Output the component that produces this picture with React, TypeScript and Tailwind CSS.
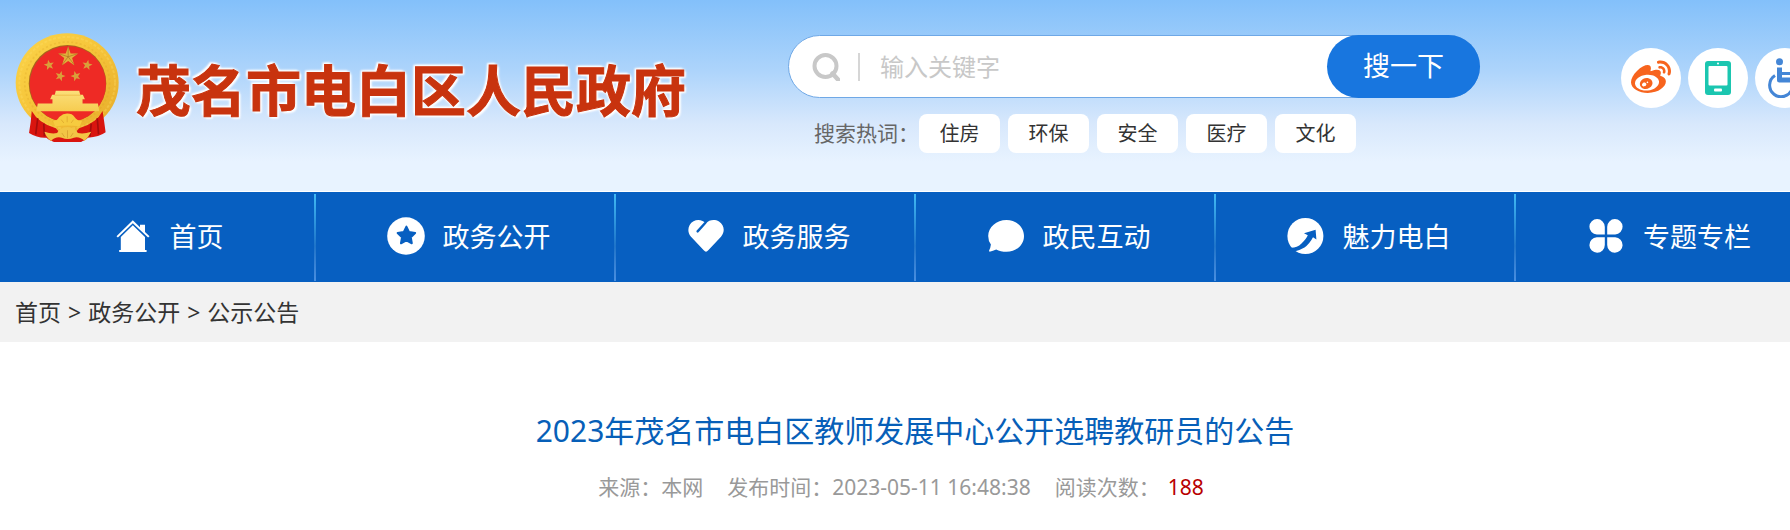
import type { ReactNode } from "react";
import { FaWeibo } from "react-icons/fa";

const star = (cx: number, cy: number, r: number, inner = 0.4, turn = 0) =>
  Array.from({ length: 10 }, (_, i) => {
    const a = -Math.PI / 2 + turn + (i * Math.PI) / 5;
    const d = i % 2 ? r * inner : r;
    return `${(cx + d * Math.cos(a)).toFixed(2)},${(cy + d * Math.sin(a)).toFixed(2)}`;
  }).join(" ");

function Emblem() {
  return (
    <svg viewBox="28 18 314 332" className="h-[111px] w-[105px] shrink-0" aria-hidden="true">
      <defs>
        <linearGradient id="gold" x1="0" y1="0" x2="1" y2="1">
          <stop offset="0" stopColor="#fbd54a" />
          <stop offset="0.45" stopColor="#f6c53a" />
          <stop offset="1" stopColor="#e6ab2a" />
        </linearGradient>
        <linearGradient id="gate" x1="0" y1="0" x2="0" y2="1">
          <stop offset="0" stopColor="#fbdf7a" />
          <stop offset="1" stopColor="#f6cc50" />
        </linearGradient>
      </defs>
      <ellipse cx="184" cy="170" rx="154" ry="148" fill="url(#gold)" />
      <ellipse cx="184" cy="170" rx="143" ry="137" fill="none" stroke="#ffe26e" strokeWidth="6" strokeDasharray="9 5" opacity="0.3" />
      <ellipse cx="184" cy="170" rx="127" ry="122" fill="none" stroke="#d89a20" strokeWidth="5" strokeDasharray="6 7" opacity="0.25" />
      <ellipse cx="185" cy="172" rx="116" ry="115" fill="#a8641c" />
      <ellipse cx="186" cy="174" rx="114" ry="114" fill="#ee2a25" />
      <path d="M78 254 Q98 290 150 306 L166 324 L150 347 Q132 344 122 334 Q96 336 70 320 Q76 286 78 254Z" fill="#d9150f" />
      <path d="M290 254 Q272 290 220 306 L204 324 L218 347 Q238 344 246 334 Q280 332 299 318 Q295 286 290 254Z" fill="#d9150f" />
      <path d="M96 276 L90 324 M114 292 L116 330 M274 276 L278 324 M256 292 L252 330" stroke="#a50d0c" strokeWidth="5" fill="none" />
      <path d="M128 322 H242 L226 347 H144Z" fill="#d9150f" />
      <polygon points={star(187, 92, 31)} fill="#e2b13c" />
      <path d="M187 62 V92 L215 83 M187 92 L205 116 M187 92 L169 116 M187 92 L159 83" stroke="#a9721f" strokeWidth="2" fill="none" />
      <polygon points={star(130, 117, 16, 0.42, -0.2)} fill="#d9a03a" />
      <polygon points={star(244, 117, 16, 0.42, 0.2)} fill="#d9a03a" />
      <polygon points={star(163, 150, 16, 0.42, 0.3)} fill="#d9a03a" />
      <polygon points={star(210, 150, 16, 0.42, -0.3)} fill="#d9a03a" />
      <path d="M150 194 H220 L223 206 H231 L237 219 H230 V232 H276 L280 255 H92 L96 232 H140 V219 H133 L139 206 H147Z" fill="url(#gate)" />
      <path d="M146 207 H225" stroke="#eab23c" strokeWidth="2" />
      <path d="M142 284 Q154 284 160 272 Q172 262 184 262 Q200 262 206 272 Q214 284 228 284 L222 300 Q202 298 185 298 Q166 298 148 300Z" fill="#f6cb3f" />
      <path d="M166 280 L174 290 M184 270 V288 M203 280 L196 290" stroke="#d9a02a" strokeWidth="2" />
      <path d="M116 316 Q138 324 154 320 Q160 304 185 302 Q210 304 216 320 Q234 324 256 316 Q246 334 236 344 Q222 330 204 334 Q185 342 168 334 Q148 330 136 344 Q122 334 116 316Z" fill="#f2c545" />
      <path d="M168 320 L176 332 M185 312 V336 M202 320 L194 332" stroke="#d0962a" strokeWidth="2" />
    </svg>
  );
}

const HomeIcon = () => (
  <svg viewBox="0 0 34 32" className="h-8 w-[34px]" fill="#fff" aria-hidden="true">
    <path d="M0.5 16.2 16.8 0.2 24 7.2V4.8h5v7.3l4.5 4.1-1.4 1.4L16.8 3.2 1.9 17.6Z" />
    <path d="M16.8 5.2 29 17v13h1.6v2H3.2v-2h1.6V17Z" />
  </svg>
);
const StarIcon = () => (
  <svg viewBox="0 0 38 38" className="h-[38px] w-[38px]" aria-hidden="true">
    <circle cx="19" cy="19" r="18.8" fill="#fff" />
    <polygon points={star(19.4, 18.8, 9.2, 0.5)} fill="#075fc1" stroke="#075fc1" strokeWidth="2" strokeLinejoin="round" />
  </svg>
);
const HeartIcon = () => (
  <svg viewBox="0 0 36 32" className="h-8 w-9" aria-hidden="true">
    <path d="M18 31.8Q17 31.8 15.5 30L3 16.8C-1.5 12 0 4 5.5 1.2C10-1 15 0.2 18 3.5C21-0.2 26.5-1 31 1.5C36.5 5 37.2 12 33 16.8L20.5 30Q19 31.8 18 31.8Z" fill="#fff" />
    <path d="M17.2 3 9.6 11.4" stroke="#075fc1" strokeWidth="2.4" strokeLinecap="round" />
  </svg>
);
const ChatIcon = () => (
  <svg viewBox="0 0 36 32" className="h-8 w-9" aria-hidden="true">
    <path d="M18.5 0C28.5 0 36 7 36 16S28.5 31.8 18.5 31.8C14.5 31.8 11 31 8.2 29.4Q5 30.8 1.6 31.7Q1 31.5 1.1 30.5Q2.6 27.5 2.9 24.5Q0.2 21 0.2 16C0.2 7 8.5 0 18.5 0Z" fill="#fff" />
  </svg>
);
const ArrowIcon = () => (
  <svg viewBox="0 0 37 36" className="h-9 w-[37px]" aria-hidden="true">
    <circle cx="18.4" cy="18" r="18" fill="#fff" />
    <path d="M3.5 29.8Q10 30 14.5 25.5Q19.5 20.5 20.8 17.2L17 15.2 28.6 11.7 29.4 21.5 26 19.3Q22.5 26 17.5 29.5Q13 32.2 7.5 33.4Z" fill="#075fc1" />
  </svg>
);
const CloverIcon = () => (
  <svg viewBox="0 0 34 34" className="h-[34px] w-[34px]" fill="#fff" aria-hidden="true">
    <path d="M15.8 15.5H7.8A7.7 7.7 0 1 1 15.8 7.8Z" />
    <path d="M18.2 15.5H26.2A7.7 7.7 0 1 0 18.2 7.8Z" />
    <path d="M15.8 18.3H7.8A7.7 7.7 0 1 0 15.8 26Z" />
    <path d="M18.2 18.3H26.2A7.7 7.7 0 1 1 18.2 26Z" />
  </svg>
);

const nav: { label: string; icon: ReactNode }[] = [
  { label: "首页", icon: <HomeIcon /> },
  { label: "政务公开", icon: <StarIcon /> },
  { label: "政务服务", icon: <HeartIcon /> },
  { label: "政民互动", icon: <ChatIcon /> },
  { label: "魅力电白", icon: <ArrowIcon /> },
  { label: "专题专栏", icon: <CloverIcon /> },
];

const hotWords = ["住房", "环保", "安全", "医疗", "文化"];

function Search() {
  return (
    <form className="w-[692px]" onSubmit={(e) => e.preventDefault()}>
      <div className="flex h-[63px] rounded-full border border-[#6fa8e6] bg-white">
        <label htmlFor="keyword" className="flex items-center pl-[23px]" aria-label="输入关键字">
          <svg viewBox="0 0 28 28" className="h-7 w-7" fill="none" stroke="#c8c8c8" aria-hidden="true">
            <circle cx="13.5" cy="13" r="11" strokeWidth="4" />
            <path d="M20.5 20.5 26 26.500" strokeWidth="4.5" strokeLinecap="round" />
          </svg>
          <span className="ml-[18px] h-7 w-0.5 bg-[#d6d6d6]" />
        </label>
        <input
          id="keyword"
          placeholder="输入关键字"
          className="min-w-0 flex-1 bg-transparent px-5 text-2xl outline-none placeholder:text-[#c8c8c8]"
        />
        <button className="-my-px -mr-px w-[153px] rounded-full bg-[#1876df] text-[27px] text-white">搜一下</button>
      </div>
      <div className="mt-4 flex items-center gap-2 pl-[26px]">
        <span className="-mr-2 text-[21px] leading-none text-[#666]">搜索热词：</span>
        {hotWords.map((w) => (
          <a key={w} href="#" className="h-[39px] w-[81px] rounded-lg bg-white text-center text-xl leading-[39px] text-[#333]">
            {w}
          </a>
        ))}
      </div>
    </form>
  );
}

function QuickLinks() {
  const circle = "flex size-[60px] items-center justify-center rounded-full bg-white";
  return (
    <div className="flex gap-[7px]">
      <a href="#" aria-label="微博" className={circle}>
        <FaWeibo className="size-10 text-[#f7641e]" />
      </a>
      <a href="#" aria-label="手机版" className={circle}>
        <svg viewBox="0 0 26 34" className="h-[34px] w-[26px]" aria-hidden="true">
          <rect width="26" height="34" rx="3" fill="#1bc6b0" />
          <rect x="3.5" y="5" width="19" height="19.5" rx="1" fill="#fff" />
          <circle cx="13" cy="2.6" r="1" fill="#fff" />
          <rect x="9" y="27.5" width="8" height="3" rx="1" fill="#fff" />
        </svg>
      </a>
      <a href="#" aria-label="无障碍" className={circle}>
        <svg viewBox="0 0 36 40" className="h-10 w-9" fill="none" stroke="#4486d6" aria-hidden="true">
          <circle cx="12.5" cy="3.7" r="3.5" fill="#4486d6" stroke="none" />
          <path d="M12.5 9.5V22H25L30 33H34" strokeWidth="5" strokeLinejoin="round" />
          <path d="M14 15.5H23" strokeWidth="3" />
          <path d="M8 17.5A11.5 11.5 0 1 0 25 31" strokeWidth="3" />
        </svg>
      </a>
    </div>
  );
}

export default function App() {
  return (
    <div className="overflow-x-hidden bg-white font-['Noto_Sans','Noto_Sans_CJK_SC',sans-serif]">
      <div className="min-w-[1830px]">
        <header className="border-b border-white bg-[linear-gradient(to_bottom,#83c0fa,#add4fb_37%,#d8e8fc_65%,#e8f3ff_85%)]">
          <div className="flex h-[191px] items-start pr-[15px] pl-[15px]">
            <h1 className="flex items-center pt-8 font-['Noto_Sans_CJK_SC',sans-serif] text-[55px] leading-none font-bold text-[#c8330e] [text-shadow:0_0_3px_#fff,0_0_3px_#fff,0_0_3px_#fff,0_0_4px_#fff,2px_2px_2px_#fff,-2px_-2px_2px_#fff] [-webkit-text-stroke:1px_#c8330e]">
              <Emblem />
              <span className="ml-4">茂名市电白区人民政府</span>
            </h1>
            <div className="ml-auto flex gap-[141px]">
              <div className="pt-[35px]">
                <Search />
              </div>
              <div className="pt-12">
                <QuickLinks />
              </div>
            </div>
          </div>
        </header>

        <nav className="bg-[#075fc1] px-[15px]">
          <ul className="grid grid-cols-6">
            {nav.map((n, i) => (
              <li key={n.label} className="flex h-[90px] items-center">
                <a href="#" className="flex flex-1 items-center justify-center gap-2.5 pb-0.5 text-[27px] leading-none text-white">
                  <span className="flex w-[54px] justify-center">{n.icon}</span>
                  {n.label}
                </a>
                {i < nav.length - 1 && (
                  <span className="-mr-px h-[87px] w-0.5 bg-linear-to-b from-[#41b9f3] via-[#1f74c9] via-60% to-[#4a8fe0]" />
                )}
              </li>
            ))}
          </ul>
        </nav>

        <div className="flex h-[60px] items-center gap-[7px] bg-[#f2f2f2] px-[15px] text-[23px] leading-none text-[#333]">
          <a href="#">首页</a>
          <span>&gt;</span>
          <a href="#">政务公开</a>
          <span>&gt;</span>
          <a href="#">公示公告</a>
        </div>

        <main className="px-[15px] pt-[66px] pb-7 text-center">
          <h2 className="text-[30px] leading-[45px] text-[#075fb8]">2023年茂名市电白区教师发展中心公开选聘教研员的公告</h2>
          <p className="mt-[18px] flex justify-center gap-6 pr-7 text-[21px] leading-8 text-[#999]">
            <span>来源：本网</span>
            <span>发布时间：2023-05-11 16:48:38</span>
            <span>
              阅读次数：<span className="ml-2 text-[#b80000]">188</span>
            </span>
          </p>
        </main>
      </div>
    </div>
  );
}
